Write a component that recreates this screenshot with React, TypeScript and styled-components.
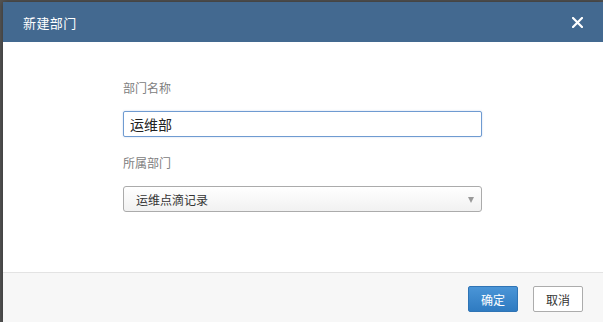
import React, { useState } from 'react'
import styled, { createGlobalStyle } from 'styled-components'

const GlobalStyle = createGlobalStyle`
  html, body {
    margin: 0;
    padding: 0;
    background: #545454;
    font-family: "Liberation Sans", "Noto Sans CJK SC", sans-serif;
  }
`

const Backdrop = styled.div`
  height: 322px;
  overflow: hidden;
  display: flex;
  padding: 2px 0 0 3px;
  box-sizing: border-box;
  background: #545454;
`

const Modal = styled.div`
  flex: 1;
  display: flex;
  flex-direction: column;
  background: #fff;
  box-shadow: 0 0 6px rgba(0, 0, 0, 0.4);
`

const Header = styled.div`
  height: 40px;
  display: flex;
  align-items: center;
  justify-content: space-between;
  padding: 0 19px 0 20px;
  background: #436990;
  color: #fff;
`

const Title = styled.h4`
  margin: 0;
  font-size: 13px;
  font-weight: normal;
  letter-spacing: 0.4px;
`

const CloseButton = styled.button`
  width: 14px;
  height: 14px;
  padding: 0;
  border: none;
  background: transparent;
  display: flex;
  align-items: center;
  justify-content: center;
  cursor: pointer;
`

const Body = styled.div`
  height: 230px;
  box-sizing: border-box;
  padding: 39px 0 0 120px;
`

const Form = styled.div`
  width: 359px;
  display: flex;
  flex-direction: column;
`

const Label = styled.label<{ $first?: boolean }>`
  font-size: 12px;
  line-height: 16px;
  color: #808080;
  margin: ${({ $first }) => ($first ? '0' : '19px')} 0 14px;
`

const TextInput = styled.input`
  height: 26px;
  box-sizing: border-box;
  padding: 0 6px;
  border: 1px solid #6f9bd1;
  border-radius: 2px;
  font-family: inherit;
  font-size: 14px;
  color: #222;
  outline: none;
  box-shadow: 0 0 2px rgba(82, 130, 200, 0.35);
`

const Select = styled.div`
  height: 26px;
  box-sizing: border-box;
  display: flex;
  align-items: center;
  justify-content: space-between;
  padding: 0 7px 0 12px;
  border: 1px solid #ababab;
  border-radius: 3px;
  background: linear-gradient(#ffffff, #f1f1f1);
  font-size: 12px;
  color: #333;
  cursor: pointer;
`

const Caret = styled.span`
  width: 0;
  height: 0;
  border-left: 3.5px solid transparent;
  border-right: 3.5px solid transparent;
  border-top: 6px solid #9a9a9a;
  margin-top: 2px;
`

const Footer = styled.div`
  flex: 1;
  display: flex;
  justify-content: flex-end;
  align-items: flex-start;
  gap: 15px;
  padding: 13px 20px 0 0;
  border-top: 1px solid #e3e3e3;
  background: #f7f7f7;
`

const Button = styled.button<{ $primary?: boolean }>`
  width: 50px;
  height: 26px;
  padding: 0;
  font-family: inherit;
  font-size: 12px;
  border-radius: 2px;
  cursor: pointer;
  border: 1px solid ${({ $primary }) => ($primary ? '#2f74b5' : '#acacac')};
  color: ${({ $primary }) => ($primary ? '#fff' : '#333')};
  background: ${({ $primary }) => ($primary ? 'linear-gradient(#4a95d7, #2f7bc1)' : '#fff')};
`

export default function App() {
  const [name, setName] = useState('运维部')

  return (
    <>
      <GlobalStyle />
      <Backdrop>
        <Modal>
          <Header>
            <Title>新建部门</Title>
            <CloseButton aria-label="close">
              <svg width="11" height="11" viewBox="0 0 11 11">
                <path d="M1 1 L10 10 M10 1 L1 10" stroke="#fff" strokeWidth="2.2" strokeLinecap="square" />
              </svg>
            </CloseButton>
          </Header>
          <Body>
            <Form>
              <Label $first>部门名称</Label>
              <TextInput value={name} onChange={e => setName(e.target.value)} />
              <Label>所属部门</Label>
              <Select>
                <span>运维点滴记录</span>
                <Caret />
              </Select>
            </Form>
          </Body>
          <Footer>
            <Button $primary>确定</Button>
            <Button>取消</Button>
          </Footer>
        </Modal>
      </Backdrop>
    </>
  )
}
